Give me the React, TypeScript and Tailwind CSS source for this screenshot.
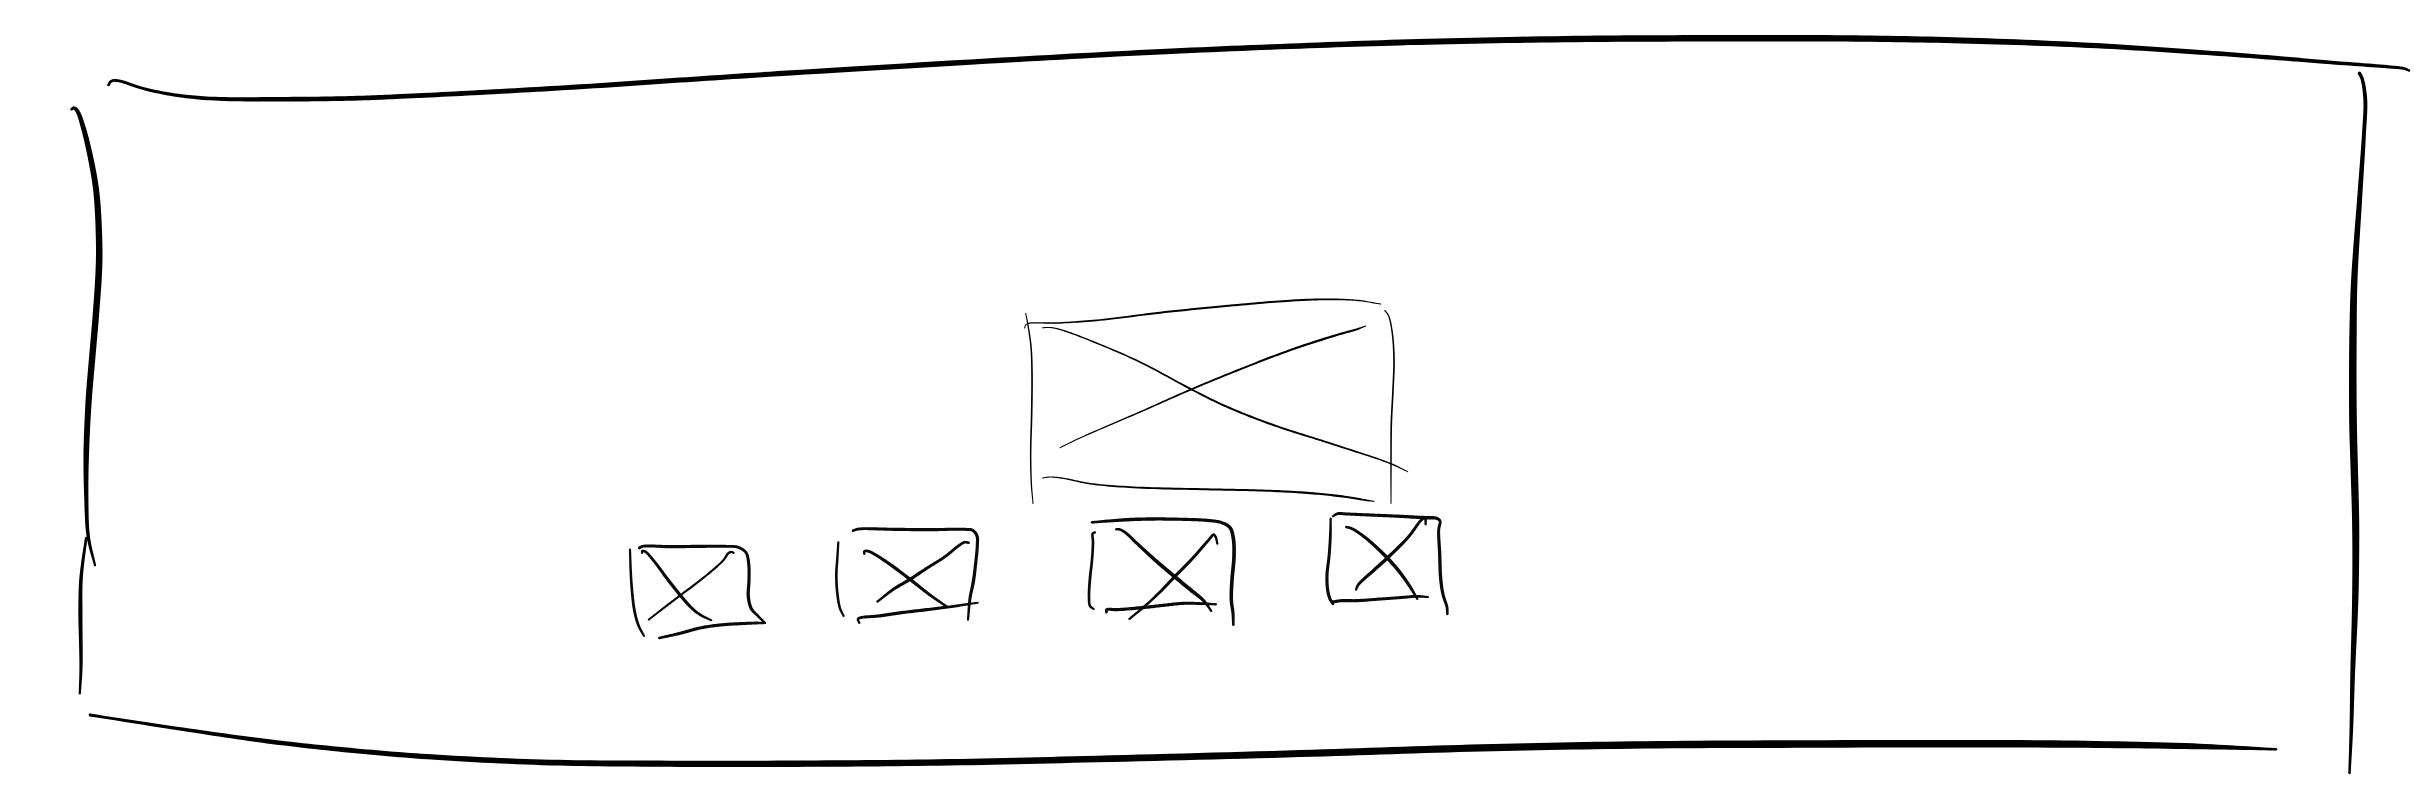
type Point = [x: number, y: number, width: number];

/* Samples a Catmull-Rom curve through the points, with the pen width as a third coordinate. */
function sampleCurve(points: Point[], steps = 14): Point[] {
  const out: Point[] = [];
  for (let i = 0; i < points.length - 1; i++) {
    const p1 = points[i];
    const p2 = points[i + 1];
    const p0 = points[i - 1] ?? p1;
    const p3 = points[i + 2] ?? p2;
    const gap = (a: Point, b: Point) => Math.max(Math.sqrt(Math.hypot(b[0] - a[0], b[1] - a[1])), 0.001);
    const d1 = gap(p0, p1);
    const d2 = gap(p1, p2);
    const d3 = gap(p2, p3);
    for (let s = 0; s < steps; s++) {
      const t = s / steps;
      const axis = (k: 0 | 1) => {
        const m1 =
          p0 === p1 ? p2[k] - p1[k] : d2 * ((p1[k] - p0[k]) / d1 - (p2[k] - p0[k]) / (d1 + d2) + (p2[k] - p1[k]) / d2);
        const m2 =
          p3 === p2 ? p2[k] - p1[k] : d2 * ((p2[k] - p1[k]) / d2 - (p3[k] - p1[k]) / (d2 + d3) + (p3[k] - p2[k]) / d3);
        const t2 = t * t;
        const t3 = t2 * t;
        return (2 * t3 - 3 * t2 + 1) * p1[k] + (t3 - 2 * t2 + t) * m1 + (3 * t2 - 2 * t3) * p2[k] + (t3 - t2) * m2;
      };
      out.push([axis(0), axis(1), p1[2] + (p2[2] - p1[2]) * t]);
    }
  }
  out.push(points[points.length - 1]);
  return out;
}

/* One pen stroke whose thickness changes along its length. */
function Stroke({ points, bleed }: { points: Point[]; bleed: number }) {
  const line = sampleCurve(points);
  const left: string[] = [];
  const right: string[] = [];
  line.forEach(([x, y, w], i) => {
    const a = line[Math.max(i - 1, 0)];
    const b = line[Math.min(i + 1, line.length - 1)];
    const len = Math.hypot(b[0] - a[0], b[1] - a[1]) || 1;
    const half = (w + bleed) / 2;
    const nx = (-(b[1] - a[1]) / len) * half;
    const ny = ((b[0] - a[0]) / len) * half;
    left.push(`${(x + nx).toFixed(2)} ${(y + ny).toFixed(2)}`);
    right.unshift(`${(x - nx).toFixed(2)} ${(y - ny).toFixed(2)}`);
  });
  const start = line[0];
  const end = line[line.length - 1];
  return (
    <g>
      <path d={`M${left.join("L")}L${right.join("L")}Z`} />
      <circle cx={start[0]} cy={start[1]} r={(start[2] + bleed) / 2} />
      <circle cx={end[0]} cy={end[1]} r={(end[2] + bleed) / 2} />
    </g>
  );
}

function Sketch({
  strokes,
  viewBox,
  className,
  label,
  stretch = false,
  bleed = 0,
}: {
  strokes: Point[][];
  viewBox: string;
  className: string;
  label?: string;
  stretch?: boolean;
  /* Extra ink added to every stroke's width. */
  bleed?: number;
}) {
  return (
    <svg
      viewBox={viewBox}
      className={className}
      preserveAspectRatio={stretch ? "none" : undefined}
      role={label ? "img" : undefined}
      aria-label={label}
      aria-hidden={label ? undefined : true}
    >
      {strokes.map((points, i) => (
        <Stroke key={i} points={points} bleed={bleed} />
      ))}
    </svg>
  );
}

const frame: Point[][] = [
  [
    [108.5, 85, 2.2], [110.3, 82, 2.4], [113.5, 80.5, 2.4], [121, 81.3, 2.5], [140, 87.6, 2.6], [170, 94.2, 2.8],
    [210, 98.5, 3.3], [283, 99.2, 4.2], [350, 98.4, 4.3], [396, 96.7, 4.3], [480, 92.5, 4.4], [580, 86.8, 4.5],
    [680, 80.1, 4.6], [778, 73.7, 4.8], [1001, 60.3, 5], [1161, 51.7, 5], [1300, 45.9, 5.1], [1428, 41.7, 5.5],
    [1587, 38.9, 6], [1721, 38.3, 6.1], [1855, 38.5, 6], [1970, 40.7, 5.5], [2097, 45.7, 4.8], [2200, 52.3, 4.3],
    [2283, 58.5, 3.8], [2327, 62.2, 3.3], [2387, 66.7, 2.8], [2404, 68.5, 2.4], [2409, 70.5, 2],
  ],
  [
    [71.5, 109.2, 2], [74, 108, 3], [77.3, 111, 3.5], [83.5, 128.3, 4.5], [91.7, 163.3, 5.2], [96.5, 193.3, 5.6],
    [99, 236.7, 6], [99, 266.7, 6.2], [96, 313.3, 6], [92, 360, 6], [88.7, 400, 5.8], [86.3, 452.3, 5.2],
    [86.3, 496.7, 3.8], [88.3, 536.7, 3], [95, 565.3, 1.8],
  ],
  [
    [86.2, 538, 2.2], [82.3, 566, 2.8], [80.8, 582.7, 3.2], [80.4, 613.3, 3.8], [81, 666.7, 2.8], [79.8, 693.5, 1.8],
  ],
  [
    [90, 715, 2.4], [183, 729.3, 3], [267, 741.2, 4], [350, 750.3, 4.5], [427.6, 756.7, 4.8],
    [542, 762.3, 5.3], [660, 763.7, 5.8], [797, 763.7, 6], [938, 762.5, 6], [1097, 759, 6.2], [1300, 753.6, 6.6],
    [1459, 748.5, 6.8], [1619, 745.2, 7], [1810, 744, 7.2], [2052, 744, 7], [2193, 746.3, 5.5], [2276, 749.3, 2],
  ],
  [
    [2359.5, 73.3, 3], [2362.3, 79.3, 3], [2365.3, 100, 3.5], [2364, 133.3, 3.5], [2360, 193.3, 4.5],
    [2354.3, 280, 6], [2353, 336.7, 7], [2353, 420, 7.3], [2354.3, 470, 7], [2355.7, 526.7, 6.7],
    [2355.3, 596.7, 6], [2352.7, 673.3, 4.3], [2351.3, 730, 3.2], [2349.5, 773, 2],
  ],
];

const hero: Point[][] = [
  [[74, 144, 2.5], [77, 135, 2.5], [86, 130, 3], [170, 129, 4], [300, 120, 4.5], [480, 98, 5.5], [700, 76, 5.5], [870, 62, 5.5], [980, 58, 5], [1070, 61, 3.5], [1142, 72, 2.5]],
  [[77, 100, 2.5], [83, 130, 3.5], [93, 200, 4], [96, 280, 4.5], [95, 400, 4.5], [92, 520, 4], [94, 610, 3.5], [99, 670, 2.5]],
  [[1155, 92, 3], [1166, 108, 3.5], [1177, 160, 4], [1182, 240, 4.5], [1179, 330, 4.5], [1174, 430, 4.5], [1173, 550, 4], [1173, 670, 2.5]],
  [[128, 594, 2.5], [150, 591, 3], [190, 595, 3.5], [270, 611, 4], [400, 622, 5], [620, 628, 5.5], [800, 632, 5.5], [940, 640, 6], [1040, 651, 6], [1100, 661, 4.5], [1122, 664, 2.5]],
  [[128, 143, 2.5], [155, 143, 3], [195, 153, 3.5], [330, 206, 4], [430, 251, 4.5], [574, 328, 5], [680, 380, 5.5], [820, 435, 5.5], [1000, 493, 5], [1170, 550, 4], [1223, 575, 2.5]],
  [[180, 503, 2.5], [240, 474, 3], [420, 396, 4], [574, 328, 5], [720, 268, 5.5], [880, 207, 6], [1010, 165, 6.5], [1070, 148, 5.5], [1097, 138, 2.5]],
];

/* Each thumbnail is drawn on its own part of a shared sheet, three units to the pixel. */
const thumbnails: { viewBox: string; strokes: Point[][] }[] = [
  {
    viewBox: "-90 -30 690 420",
    strokes: [
      [[60, 89, 5], [62, 150, 6], [65, 200, 6.5], [73, 270, 7], [85, 315, 6.5], [102, 348, 5]],
      [[88, 84, 7], [98, 79, 7], [180, 80, 8], [280, 79, 8], [350, 79, 7], [385, 82, 7], [408, 98, 7], [416, 130, 8], [417, 180, 8], [415, 230, 8.5], [424, 266, 8], [445, 289, 6.5], [465, 309, 5]],
      [[465, 309, 5], [440, 309, 7], [390, 311, 8], [330, 315, 8], [270, 324, 8], [210, 340, 8], [148, 354, 6]],
      [[96, 99, 5], [97, 93, 6], [106, 95, 6.5], [135, 127, 7], [170, 174, 8], [211, 226, 8.5], [245, 264, 7.5], [272, 285, 6.5], [304, 301, 4.5]],
      [[371, 99, 5], [366, 96, 5], [356, 99, 6], [340, 121, 5], [305, 153, 5], [255, 193, 5], [211, 226, 5], [165, 261, 5], [116, 299, 4]],
    ],
  },
  {
    viewBox: "600 -30 690 420",
    strokes: [
      [[685, 67, 5], [682, 115, 6], [679, 165, 6.5], [682, 220, 6.5], [690, 265, 6], [701, 288, 4.5]],
      [[729, 32, 6], [746, 27, 7], [850, 28, 8], [960, 29, 8], [1065, 28, 7.5], [1088, 31, 7.5], [1101, 48, 8], [1102, 75, 8], [1097, 130, 8], [1090, 185, 8.5], [1080, 235, 7.5], [1074, 299, 5]],
      [[748, 309, 5], [744, 297, 6], [752, 293, 7], [805, 288, 8], [875, 278, 8], [950, 269, 8], [1030, 259, 7], [1103, 248, 4.5]],
      [[763, 102, 5], [763, 94, 6], [776, 94, 7], [830, 126, 8], [900, 178, 8.5], [960, 225, 7.5], [1012, 261, 5]],
      [[1076, 68, 6], [1063, 67, 6.5], [1045, 78, 7], [1005, 110, 7], [950, 145, 7.5], [900, 178, 8.5], [850, 208, 7.5], [802, 245, 5]],
    ],
  },
  {
    viewBox: "-90 30 690 420",
    strokes: [
      [[75, 97, 5], [68, 101, 6], [69, 125, 6.5], [66, 180, 6.5], [60, 235, 7], [57, 290, 6.5], [60, 318, 6], [71, 327, 5]],
      [[66, 67, 6], [115, 63, 7.5], [175, 59, 9], [240, 57, 8.5], [340, 58, 8], [410, 61, 8], [455, 68, 8], [480, 83, 9], [490, 115, 9.5], [492, 170, 9.5], [486, 240, 9.5], [484, 300, 9], [489, 340, 8], [490, 374, 6]],
      [[109, 337, 6], [110, 329, 7], [140, 329, 8], [215, 323, 8.5], [280, 316, 8], [340, 310, 8], [400, 311, 7], [438, 313, 5]],
      [[138, 88, 5], [148, 88, 6], [165, 97, 7], [205, 134, 8], [255, 180, 9.5], [314, 230, 10], [365, 272, 10], [400, 301, 8], [424, 333, 5]],
      [[442, 131, 5], [437, 111, 6], [431, 104, 6.5], [415, 121, 7], [365, 178, 7.5], [314, 230, 8], [270, 276, 7], [225, 318, 6], [178, 357, 5]],
    ],
  },
  {
    viewBox: "600 30 690 420",
    strokes: [
      [[782, 56, 5], [781, 110, 7], [777, 170, 7.5], [771, 225, 8], [773, 270, 8], [780, 297, 8], [789, 312, 6]],
      [[789, 49, 5], [803, 41, 7], [830, 42, 7.5], [900, 45, 8], [970, 48, 8], [1065, 53, 9], [1100, 55, 8], [1110, 63, 7], [1106, 90, 7.5], [1109, 160, 8.5], [1112, 235, 8.5], [1119, 283, 8], [1131, 322, 7], [1132, 342, 6]],
      [[787, 306, 8], [815, 302, 8], [860, 302, 8], [930, 297, 7.5], [1000, 292, 7.5], [1040, 289, 7], [1074, 291, 4.5]],
      [[829, 81, 6], [846, 86, 7], [885, 112, 8], [915, 138, 8.5], [952, 174, 9.5], [988, 215, 9], [1020, 260, 8], [1042, 297, 5]],
      [[1067, 73, 5], [1065, 52, 7], [1053, 61, 7], [1015, 111, 7.5], [952, 174, 9], [910, 212, 8.5], [865, 254, 7], [858, 269, 5]],
    ],
  },
];

export default function App() {
  return (
    <main className="relative bg-white fill-black pt-[280px] pb-[150px]">
      <Sketch strokes={frame} viewBox="0 0 2414 800" className="absolute inset-0 h-full w-full" stretch bleed={0.4} />
      <section className="relative flex flex-col items-center">
        <Sketch
          strokes={hero}
          viewBox="0 0 1242 690"
          className="h-[230px] w-[414px] max-w-full"
          label="Main image"
          bleed={0.5}
        />
        <ul className="mr-[334px] grid w-[920px] grid-cols-4">
          {thumbnails.map(({ viewBox, strokes }, i) => (
            <li key={viewBox}>
              <Sketch
                strokes={strokes}
                viewBox={viewBox}
                className="h-[140px] w-full fill-neutral-950"
                label={`Thumbnail ${i + 1}`}
                bleed={1.5}
              />
            </li>
          ))}
        </ul>
      </section>
    </main>
  );
}
